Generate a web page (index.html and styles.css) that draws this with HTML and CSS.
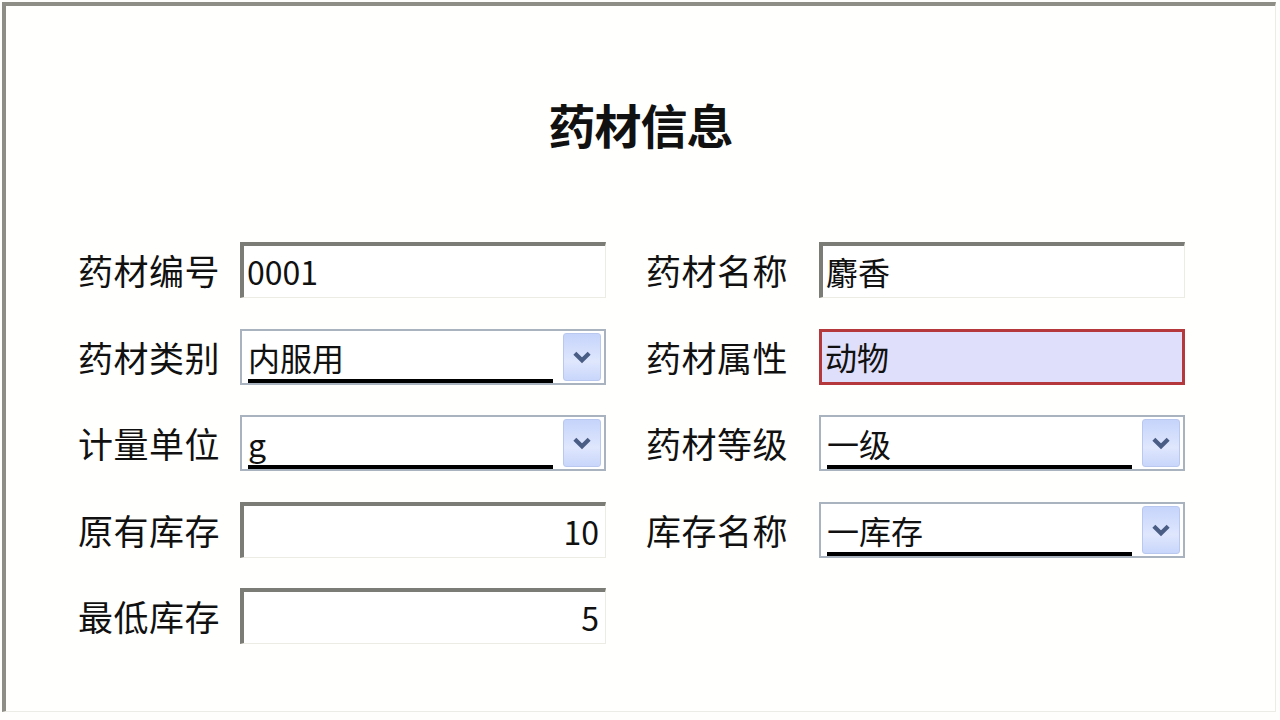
FILE: index.html
```html
<!DOCTYPE html>
<html lang="zh">
<head>
    <meta charset="UTF-8">
    <title>药材信息</title>
    <link rel="stylesheet" href="styles.css">
</head>
<body>
    <div class="frame">
        <h1 class="title">药材信息</h1>
        <form class="form-grid">
            <label class="lbl">药材编号</label>
            <div class="field text">0001</div>
            <span></span>
            <label class="lbl">药材名称</label>
            <div class="field text">麝香</div>

            <label class="lbl">药材类别</label>
            <div class="field combo"><span class="sel">内服用</span><span class="drop"><svg viewBox="0 0 20 20" width="22" height="22"><path d="M3.5 6.5 L10 13 L16.5 6.5" fill="none" stroke="#4a5d85" stroke-width="3.8"/></svg></span></div>
            <span></span>
            <label class="lbl">药材属性</label>
            <div class="field warn">动物</div>

            <label class="lbl">计量单位</label>
            <div class="field combo"><span class="sel">g</span><span class="drop"><svg viewBox="0 0 20 20" width="22" height="22"><path d="M3.5 6.5 L10 13 L16.5 6.5" fill="none" stroke="#4a5d85" stroke-width="3.8"/></svg></span></div>
            <span></span>
            <label class="lbl">药材等级</label>
            <div class="field combo"><span class="sel">一级</span><span class="drop"><svg viewBox="0 0 20 20" width="22" height="22"><path d="M3.5 6.5 L10 13 L16.5 6.5" fill="none" stroke="#4a5d85" stroke-width="3.8"/></svg></span></div>

            <label class="lbl">原有库存</label>
            <div class="field text num">10</div>
            <span></span>
            <label class="lbl">库存名称</label>
            <div class="field combo"><span class="sel">一库存</span><span class="drop"><svg viewBox="0 0 20 20" width="22" height="22"><path d="M3.5 6.5 L10 13 L16.5 6.5" fill="none" stroke="#4a5d85" stroke-width="3.8"/></svg></span></div>

            <label class="lbl">最低库存</label>
            <div class="field text num">5</div>
        </form>
    </div>
</body>
</html>
```

FILE: styles.css
```css
body {
    margin: 0;
    background-color: #fefefc;
    font-family: "Noto Sans CJK SC", "DejaVu Sans", sans-serif;
    color: #111;
}
.frame {
    margin: 2px 4px 4px 2px;
    height: 710px;
    box-sizing: border-box;
    border-top: 4px solid #8e8e86;
    border-left: 4px solid #8e8e86;
    border-right: 1px solid #ecece6;
    border-bottom: 1px solid #ecece6;
    background-color: #fffffd;
}
.title {
    margin: 0;
    padding-top: 83px;
    text-align: center;
    font-size: 47px;
    font-weight: bold;
    line-height: 70px;
    letter-spacing: -1px;
}
.form-grid {
    display: grid;
    grid-template-columns: 162px 366px 40px 173px 366px;
    grid-auto-rows: 56px;
    row-gap: 30.5px;
    margin: 83px 0 0 72px;
}
.lbl {
    font-size: 35px;
    line-height: 56px;
    white-space: nowrap;
    letter-spacing: 0.5px;
}
.field {
    box-sizing: border-box;
    height: 56px;
    font-size: 32px;
    line-height: 50px;
    padding: 0 6px;
    white-space: nowrap;
    overflow: hidden;
}
.text {
    background-color: #fff;
    border-top: 4px solid #7c7c76;
    border-left: 4px solid #7c7c76;
    border-right: 1px solid #ecece4;
    border-bottom: 1px solid #ecece4;
    padding-left: 3px;
}
.num {
    text-align: right;
    padding-right: 6px;
}
.warn {
    background-color: #dfdffc;
    border: 3px solid #b4383c;
    line-height: 48px;
    padding-left: 3px;
}
.combo {
    display: flex;
    align-items: center;
    gap: 10px;
    background-color: #fff;
    border: 2px solid #a9b3c0;
    padding: 0 3px 0 6px;
}
.sel {
    flex: 1;
    height: 44px;
    line-height: 44px;
    border-bottom: 4px solid #000;
    margin-top: 4px;
}
.drop {
    width: 36px;
    height: 46px;
    display: flex;
    align-items: center;
    justify-content: center;
    border-radius: 3px;
    background: linear-gradient(#c6d4fb, #dfe7fd 60%, #c9d6fb);
    border: 1px solid #b9c8ee;
}
```
